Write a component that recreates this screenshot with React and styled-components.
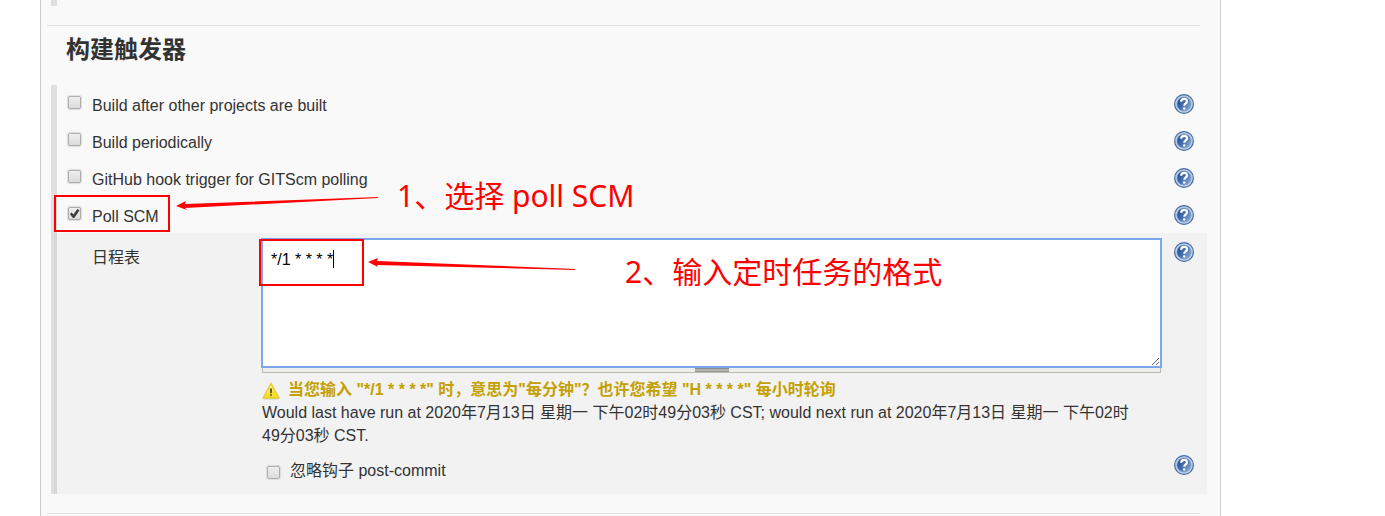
import React, { useId, useState } from "react";
import styled, { createGlobalStyle } from "styled-components";

const GlobalStyle = createGlobalStyle`
  * { box-sizing: border-box; }
  body {
    margin: 0;
    background: #fff;
    color: #333;
    font: 16px/23px "Liberation Sans", Arial, "Noto Sans CJK SC", sans-serif;
  }
`;

const Panel = styled.main`
  position: relative;
  min-height: 100vh;
  margin: 0 164px 0 40px;
  border: solid #ccc;
  border-width: 0 1px;
  background: #f9f9f9;
`;

const PreviousSection = styled.div`
  height: 6px;
  margin-left: 10px;
  border-left: 6px solid #dfdfdf;
`;

const Divider = styled.hr`
  height: 1px;
  margin: 19px 20px 0 6px;
  border: 0;
  background: #ddd;
`;

const Title = styled.h2`
  margin: 8px 25px 19px;
  font-size: 24px;
  line-height: 32px;
  font-weight: 700;
`;

const Triggers = styled.section`
  position: relative;
  margin: 0 13px 0 10px;
  background: linear-gradient(to right, #dfdfdf 6px, transparent 6px);
`;

const TriggerRow = styled.div`
  display: flex;
  align-items: flex-start;
  justify-content: space-between;
  height: 37px;
  padding: 9px 13px 0 17px;
`;

const CheckLabel = styled.label`
  display: flex;
  align-items: flex-start;
  gap: ${(p) => (p.$nested ? "10px" : "11px")};
  padding-top: ${(p) => (p.$nested ? "4px" : "0")};
`;

const Checkbox = styled.input.attrs({ type: "checkbox" })`
  appearance: none;
  flex: none;
  width: 13px;
  height: 13px;
  margin: ${(p) => (p.$nested ? "7px 0 0 5px" : "2px 0 0")};
  border: 1px solid #adadad;
  border-radius: 2px;
  background: linear-gradient(#ededed, #dcdcdc);
  box-shadow: 0 0 1px 1px #ddd, inset 0 1px 0 #f2f2f2;

  &:checked::before {
    content: "";
    display: block;
    width: 11px;
    height: 11px;
    background: #3c3c3c;
    clip-path: polygon(8% 54%, 25% 41%, 40% 58%, 76% 8%, 96% 20%, 48% 92%, 36% 92%);
  }
`;

const HelpButton = styled.button`
  flex: none;
  width: 20px;
  height: 20px;
  padding: 0;
  border: 0;
  background: none;
  cursor: pointer;

  svg { display: block; }
`;

const Details = styled.div`
  display: grid;
  grid-template-columns: 170px minmax(0, 1fr) 46px;
  margin-left: 3px;
  padding: 6px 0 12px 35px;
  border-left: 3px solid #d8d8d8;
  background: #f2f2f2;
`;

const FieldLabel = styled.label`
  padding-top: 7px;
`;

const Field = styled.div`
  min-width: 0;
`;

const HelpCell = styled.div`
  display: flex;
  align-items: flex-start;
  padding: ${(p) => (p.$nested ? "0" : "3px")} 13px 0;
`;

const Schedule = styled.textarea`
  display: block;
  width: 100%;
  height: 128px;
  padding: 8px;
  border: 1px solid #7aa7ee;
  outline: 1px solid #7aa7ee;
  background: #fff;
  color: #000;
  font: inherit;
  resize: vertical;
`;

const ResizeBar = styled.div`
  display: flex;
  justify-content: center;
  height: 6px;
  padding-top: 1px;
  border: solid #b9b9ad;
  border-width: 0 1px 1px;
  background: #eee;
`;

const Grip = styled.span`
  width: 34px;
  height: 4px;
  border-top: 1px solid #888;
  border-bottom: 1px solid #999;
  background: #b4b4ae;
`;

const Warning = styled.div`
  display: flex;
  gap: 8px;
  margin-top: 5px;
  color: #c4a000;
  font-weight: 700;

  svg { flex: none; margin-top: 4px; }
`;

const Note = styled.p`
  margin: 0 0 8px;
  padding-right: 18px;
`;

const RedFrame = styled.div`
  position: absolute;
  border: 2px solid #f00;
  pointer-events: none;
`;

const PollFrame = styled(RedFrame)`
  left: 3px;
  top: 110px;
  width: 116px;
  height: 37px;
`;

const ScheduleFrame = styled(RedFrame)`
  left: 208px;
  top: 154px;
  width: 105px;
  height: 47px;
`;

const Caret = styled.span`
  position: absolute;
  left: 282px;
  top: 165px;
  width: 1px;
  height: 18px;
  background: #000;
`;

const Arrows = styled.svg`
  position: absolute;
  left: 124px;
  top: 105px;
  pointer-events: none;
`;

const Annotation = styled.p`
  position: absolute;
  left: ${(p) => p.$left};
  top: ${(p) => p.$top};
  margin: 0;
  color: #f00;
  font: 30px/40px "Noto Sans", "Noto Sans CJK SC", sans-serif;
  white-space: nowrap;
  pointer-events: none;
`;

function Help({ topic }) {
  const id = useId();
  return (
    <HelpButton type="button" aria-label={`Help: ${topic}`}>
      <svg width="20" height="20" viewBox="0 0 20 20" aria-hidden="true">
        <defs>
          <linearGradient id={id} x1="0" y1="0.2" x2="1" y2="0.8">
            <stop offset="0" stopColor="#1f4c90" />
            <stop offset="0.5" stopColor="#4872af" />
            <stop offset="1" stopColor="#8aabd6" />
          </linearGradient>
        </defs>
        <circle cx="10" cy="10" r="9.4" fill="#c5d3e7" stroke="#426ba8" strokeWidth="1.2" />
        <circle cx="10" cy="10" r="7.1" fill={`url(#${id})`} stroke="#7f9fca" strokeWidth="0.7" />
        <path d="M7.1 7.7C7.3 3.9 13.2 4 13 7.4C12.9 9.4 10.3 9.3 10.3 11.7" fill="none" stroke="#fff" strokeWidth="2.2" />
        <circle cx="10.2" cy="14.5" r="1.3" fill="#fff" />
      </svg>
    </HelpButton>
  );
}

function WarningIcon() {
  return (
    <svg width="18" height="18" viewBox="0 0 18 18" aria-hidden="true">
      <ellipse cx="9" cy="16.6" rx="9" ry="1.2" fill="#d7d7d2" />
      <path d="M9 1.2L17 16H1Z" fill="#f5df32" stroke="#e6cb2c" strokeWidth="1.3" strokeLinejoin="round" />
      <path d="M9 3L12 9.2C9 8.7 7 9.5 4.5 11.3Z" fill="#fbef83" />
      <path d="M7.8 6.5H10.2L9.8 11.2H8.2ZM8 12.2H10V13.8H8Z" fill="#66581d" />
    </svg>
  );
}

function Trigger({ label, initial = false }) {
  const [checked, setChecked] = useState(initial);
  return (
    <TriggerRow>
      <CheckLabel>
        <Checkbox checked={checked} onChange={(e) => setChecked(e.target.checked)} />
        <span>{label}</span>
      </CheckLabel>
      <Help topic={label} />
    </TriggerRow>
  );
}

export default function App() {
  return (
    <>
      <GlobalStyle />
      <Panel>
        <PreviousSection />
        <Divider />
        <Title>构建触发器</Title>
        <Triggers>
          <Trigger label="Build after other projects are built" />
          <Trigger label="Build periodically" />
          <Trigger label="GitHub hook trigger for GITScm polling" />
          <Trigger label="Poll SCM" initial />
          <Details>
            <FieldLabel htmlFor="schedule">日程表</FieldLabel>
            <Field>
              <Schedule id="schedule" defaultValue="*/1 * * * *" spellCheck={false} />
              <ResizeBar><Grip /></ResizeBar>
              <Warning>
                <WarningIcon />
                <span>当您输入 "*/1 * * * *" 时，意思为"每分钟"？也许您希望 "H * * * *" 每小时轮询</span>
              </Warning>
              <Note>
                Would last have run at 2020年7月13日 星期一 下午02时49分03秒 CST; would next run at 2020年7月13日 星期一 下午02时49分03秒 CST.
              </Note>
            </Field>
            <HelpCell><Help topic="日程表" /></HelpCell>
            <span />
            <CheckLabel $nested>
              <Checkbox $nested />
              <span>忽略钩子 post-commit</span>
            </CheckLabel>
            <HelpCell $nested><Help topic="忽略钩子 post-commit" /></HelpCell>
          </Details>
          <PollFrame />
          <ScheduleFrame />
          <Caret />
          <Arrows width="410" height="90" viewBox="0 0 410 90" aria-hidden="true">
            <path d="M1 16L11 11L10 14L203 7V8L10 18L12 20Z" fill="#f00" />
            <path d="M193 72L203 68L202 71L400 79V80L202 75L203 77Z" fill="#f00" />
          </Arrows>
          <Annotation $left="346px" $top="91px">1、选择 poll SCM</Annotation>
          <Annotation $left="574px" $top="167px">2、输入定时任务的格式</Annotation>
        </Triggers>
        <Divider />
      </Panel>
    </>
  );
}
